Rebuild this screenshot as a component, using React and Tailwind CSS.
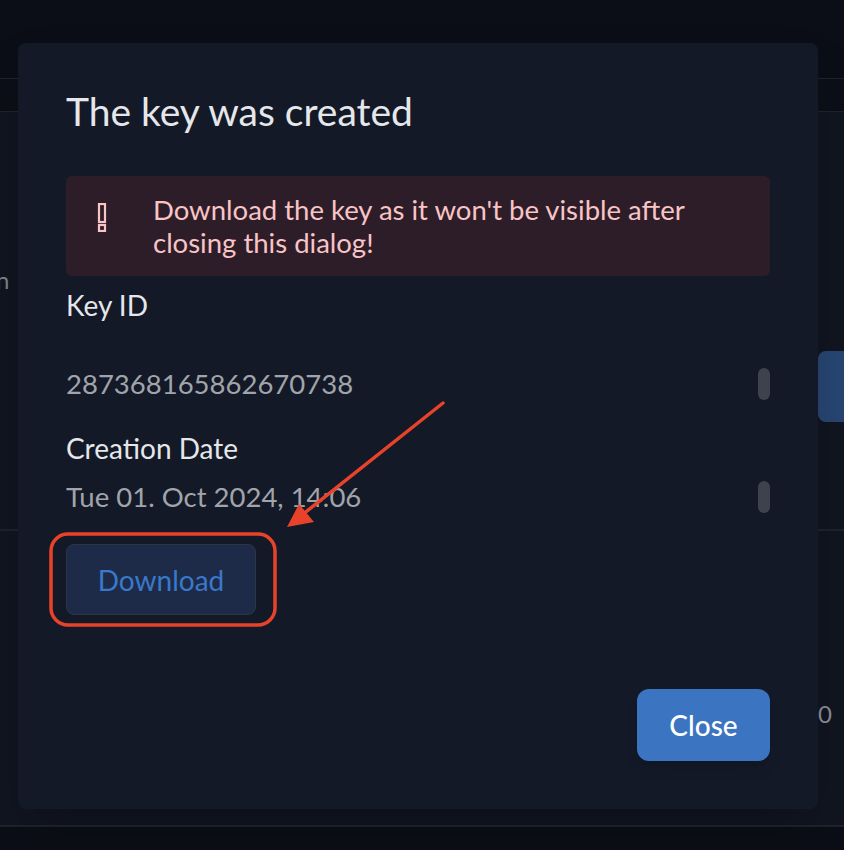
import React from "react";

const ValueRow = ({ value }) => (
  <div className="flex items-center justify-between">
    <p className="text-[27.5px] leading-[48px] text-[#a1a4ab]">{value}</p>
    <div className="h-8 w-3 rounded-full bg-[#3d424d]" />
  </div>
);

const WarnIcon = () => (
  <svg width="10" height="29" viewBox="0 0 10 29" className="mt-[10px] shrink-0">
    <rect x="2" y="1" width="6" height="18" fill="none" stroke="#f8c4c6" strokeWidth="2.2" />
    <rect x="2" y="22" width="6" height="6" fill="none" stroke="#f8c4c6" strokeWidth="2.2" />
  </svg>
);

const Backdrop = () => (
  <div className="flex h-[850px] w-full flex-col bg-[#0b0e16]">
    <div className="h-[78px] shrink-0 bg-[#0b0e16]" />
    <div className="h-[34px] shrink-0 border-y border-[#1f232c] bg-[#0c0f17]" />
    <div className="relative flex-1 bg-[#111520]">
      <p className="absolute left-[-4px] top-[150px] text-[24px] tracking-[6px] text-[#7d818a]">
        n c
      </p>
      <div className="absolute top-[417px] h-[2px] w-full bg-[#1d222c]" />
      <div className="absolute right-0 top-[239px] h-[71px] w-[26px] rounded-l-lg bg-[#274672]" />
      <p className="absolute left-[818px] top-[584px] text-[24px] text-[#8a8e96]">0</p>
    </div>
    <div className="h-[25px] shrink-0 border-t-2 border-[#1f232c] bg-[#0b0e16]" />
  </div>
);

export default function App() {
  return (
    <div
      className="relative h-[850px] w-full overflow-hidden"
      style={{ fontFamily: "Lato, 'Noto Sans', sans-serif" }}
    >
      <Backdrop />

      <div className="absolute left-[18px] top-[43px] flex h-[766px] w-[800px] flex-col rounded-lg bg-[#131927] px-12 pb-12 pt-[40px] shadow-2xl">
        <h1 className="text-[39px] leading-[56px] text-[#e6e7ea]">The key was created</h1>

        <div className="mt-[37px] flex gap-[46px] rounded-md bg-[#2d1d28] py-[17px] pl-[31px] pr-[50px] text-[#f8c4c6]">
          <WarnIcon />
          <p className="text-[27.5px] leading-[33px]">
            Download the key as it won't be visible after closing this dialog!
          </p>
        </div>

        <p className="mt-[13px] text-[28px] leading-[32px] text-[#e6e7ea]">Key ID</p>
        <div className="mt-[39px]">
          <ValueRow value="287368165862670738" />
        </div>

        <p className="mt-[24px] text-[28px] leading-[32px] text-[#e6e7ea]">Creation Date</p>
        <div className="mt-[9px]">
          <ValueRow value="Tue 01. Oct 2024, 14:06" />
        </div>

        <div className="mt-[23px]">
          <button
            type="button"
            className="h-[71px] w-[190px] rounded-lg border border-[#2e3545] bg-[#1d2b48] text-[28px] text-[#3a78c9]"
          >
            Download
          </button>
        </div>

        <div className="mt-auto flex justify-end">
          <button
            type="button"
            className="h-[72px] w-[133px] rounded-xl bg-[#3b74c1] text-[28px] font-medium text-white shadow-lg"
          >
            Close
          </button>
        </div>
      </div>

      <svg
        className="pointer-events-none absolute left-0 top-0"
        width="844"
        height="850"
        viewBox="0 0 844 850"
      >
        <rect
          x="51"
          y="534"
          width="224"
          height="91"
          rx="17"
          fill="none"
          stroke="#e8432a"
          strokeWidth="3.5"
        />
        <line x1="443" y1="403" x2="302" y2="515" stroke="#e8432a" strokeWidth="3.5" strokeLinecap="round" />
        <polygon points="287,527 314,522 299,504" fill="#e8432a" />
      </svg>
    </div>
  );
}
